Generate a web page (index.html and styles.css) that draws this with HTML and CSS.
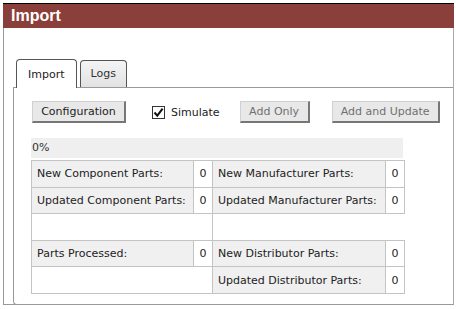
FILE: index.html
```html
<!DOCTYPE html>
<html lang="en">
<head>
    <meta charset="UTF-8">
    <title>Import</title>
    <link rel="stylesheet" href="styles.css">
</head>
<body>
    <div class="window">
        <div class="window-title">Import</div>
        <div class="window-body">

            <!-- Tabs -->
            <ul class="tabs">
                <li class="tab active">Import</li>
                <li class="tab">Logs</li>
            </ul>

            <div class="tab-panel">
                <div class="toolbar">
                    <button type="button" class="btn btn-config">Configuration</button>
                    <label class="check">
                        <span class="box">
                            <svg width="11" height="11" viewBox="0 0 11 11"><path d="M1.5 5.5 L4.3 8.6 L9.6 1.6" fill="none" stroke="#111" stroke-width="2"/></svg>
                        </span>
                        Simulate
                    </label>
                    <button type="button" class="btn btn-add" disabled>Add Only</button>
                    <button type="button" class="btn btn-update" disabled>Add and Update</button>
                </div>

                <div class="progress">0%</div>

                <table class="stats">
                    <colgroup>
                        <col class="c-label">
                        <col class="c-value">
                        <col class="c-label2">
                        <col class="c-value">
                    </colgroup>
                    <tbody>
                        <tr>
                            <th>New Component Parts:</th>
                            <td>0</td>
                            <th>New Manufacturer Parts:</th>
                            <td>0</td>
                        </tr>
                        <tr>
                            <th>Updated Component Parts:</th>
                            <td>0</td>
                            <th>Updated Manufacturer Parts:</th>
                            <td>0</td>
                        </tr>
                        <tr>
                            <td colspan="2" class="empty"></td>
                            <td colspan="2" class="gap"></td>
                        </tr>
                        <tr>
                            <th>Parts Processed:</th>
                            <td>0</td>
                            <th>New Distributor Parts:</th>
                            <td>0</td>
                        </tr>
                        <tr>
                            <td colspan="2" class="empty"></td>
                            <th>Updated Distributor Parts:</th>
                            <td>0</td>
                        </tr>
                    </tbody>
                </table>
            </div>
        </div>
    </div>
</body>
</html>
```

FILE: styles.css
```css
body {
    margin: 0;
    font-family: "DejaVu Sans", Verdana, sans-serif;
    font-size: 11px;
    color: #222;
    background: #fff;
}
.window {
    margin: 3px 0 0 3px;
    width: 451px;
}
.window-title {
    height: 24px;
    line-height: 24px;
    padding-left: 8px;
    border-top: 1px solid #000;
    background-color: #8a3f3a;
    color: #fff;
    font-family: "Liberation Sans", Arial, sans-serif;
    font-size: 16px;
    font-weight: bold;
}
.window-body {
    height: 277px;
    box-sizing: border-box;
    padding: 31px 0 0 9px;
    border: 1px solid #999;
    border-top: none;
    border-right-color: #aaa;
}

/* tabs */
.tabs {
    display: flex;
    gap: 3px;
    margin: 0 0 0 3px;
    padding: 0;
    list-style: none;
    position: relative;
    z-index: 1;
}
.tab {
    height: 26px;
    line-height: 26px;
    margin-top: 1px;
    padding: 0 10px;
    border: 1px solid #555;
    border-bottom: none;
    border-radius: 4px 4px 0 0;
    background: linear-gradient(#f4f4f4, #e2e2e2);
    color: #333;
}
.tab.active {
    height: 28px;
    margin-top: 0;
    line-height: 29px;
    margin-bottom: -1px;
    padding: 0 11px;
    background: #fff;
    color: #222;
}
.tab-panel {
    height: 218px;
    box-sizing: border-box;
    padding: 13px 0 0 17px;
    border: 1px solid #999;
    border-right: none;
    border-radius: 0 0 0 4px;
}

/* toolbar */
.toolbar {
    display: flex;
    align-items: center;
    height: 22px;
}
.btn {
    height: 22px;
    padding: 0;
    font-family: inherit;
    font-size: 11px;
    white-space: nowrap;
    color: #222;
    background-color: #e8e8e8;
    border: 1px solid #d0d0d0;
    border-right: 2px solid #777;
    border-bottom: 2px solid #777;
    border-radius: 0;
}
.btn-config {
    margin-left: 1px;
    width: 94px;
}
.btn:disabled {
    color: #707070;
}
.btn-add {
    width: 70px;
    margin-left: 20px;
}
.btn-update {
    width: 108px;
    margin-left: 22px;
}
.check {
    display: flex;
    align-items: center;
    gap: 6px;
    margin-left: 26px;
    color: #222;
}
.box {
    display: flex;
    align-items: center;
    justify-content: center;
    width: 11px;
    height: 11px;
    border: 1px solid #333;
    background: #fff;
}

/* progress */
.progress {
    width: 372px;
    height: 20px;
    line-height: 20px;
    margin-top: 15px;
    padding-left: 1px;
    box-sizing: border-box;
    background-color: #efefef;
    color: #333;
}

/* stats */
.stats {
    width: 373px;
    margin-top: 2px;
    border-collapse: collapse;
    table-layout: fixed;
}
.c-label { width: 162px; }
.c-value { width: 19px; }
.c-label2 { width: 173px; }
.stats th,
.stats td {
    height: 25.6px;
    padding: 0 5px;
    border: 1px solid #c4c4c4;
    white-space: nowrap;
}
.stats th {
    text-align: left;
    font-weight: normal;
    background-color: #f0f0f0;
    color: #222;
}
.stats td {
    text-align: center;
    padding: 0;
    background-color: #fff;
}
.stats td.gap {
    border: none;
}
```
